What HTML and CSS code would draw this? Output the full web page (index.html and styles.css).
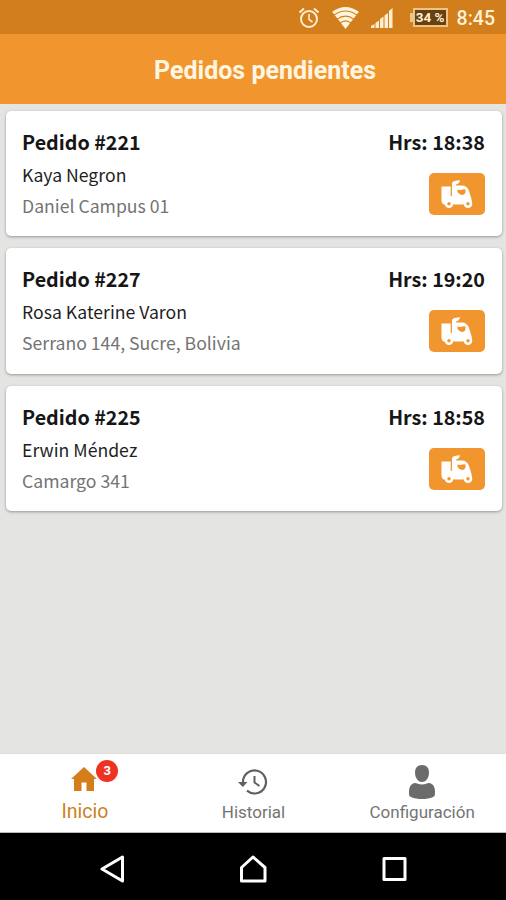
FILE: index.html
```
<!DOCTYPE html>
<html lang="es">
<head>
    <meta charset="UTF-8">
    <meta name="viewport" content="width=device-width, initial-scale=1.0">
    <title>Pedidos pendientes</title>
    <link rel="stylesheet" href="styles.css">
</head>
<body>
    <!-- truck icon shared by all the orders -->
    <svg class="defs" width="0" height="0">
        <symbol id="truck" viewBox="0 0 34 30">
            <path fill="#fff" d="M1.500 7.500h9.200v9.500h1.300V6.500h10q5 0 7 5.500l2.500 8q1 4.500-1.500 5.500H3.500q-2-1-2-4z"/>
            <path fill="#fff" d="M12 7V4q1.500-2.800 8-2.800-.5 3.500-4 4.300V8h-4z"/>
            <path fill="#f1962f" d="M17.500 10.500q2 .8 4 .2t4-.2v3q-1 2.500-3.500 2.500t-4.500-3z"/>
            <circle cx="9" cy="24.700" r="4.300" fill="#fff"/>
            <circle cx="28" cy="24.700" r="4.300" fill="#fff"/>
            <circle cx="9" cy="24.700" r="1.700" fill="#f1962f"/>
            <circle cx="28" cy="24.700" r="1.700" fill="#f1962f"/>
            <path fill="none" stroke="#f1962f" stroke-width=".8" d="M14 25.500v3M23 25.500v3"/>
        </symbol>
    </svg>

    <div class="status-bar">
        <svg class="alarm" width="22" height="22" viewBox="0 0 22 22" fill="none" stroke="#ffefd0" stroke-width="2">
            <circle cx="11" cy="12" r="8"/>
            <path d="M1.500 5.500l4.500-4M20.500 5.500l-4.500-4"/>
            <path d="M11 7v5.500l3.500 2.500" stroke-width="1.600"/>
        </svg>
        <svg class="wifi" width="27" height="22" viewBox="0 0 28 23">
            <path fill="#fff4dc" d="M14 23L0 5Q14-5 28 5z"/>
            <path fill="none" stroke="#d27e1c" stroke-width="1.100" d="M2 8.500q12-8.500 24 0M5 13q9-7 18 0M8 17q6-5 12 0"/>
        </svg>
        <svg class="signal" width="22" height="20" viewBox="0 0 22 20" fill="#ffefd0">
            <path d="M0 20v-2l3.500-2v4zM4.500 20v-5L8 12.500V20zM9 20v-9l3.500-2.500V20zM13.500 20V7.500L17 5v15zM18 20V3l3.500-3v20z"/>
        </svg>
        <div class="battery">34 %</div>
        <div class="clock">8:45</div>
    </div>

    <header class="header">
        <h1>Pedidos pendientes</h1>
    </header>

    <main class="orders">
        <div class="order">
            <div class="info">
                <h2>Pedido #221</h2>
                <p class="name">Kaya Negron</p>
                <p class="address">Daniel Campus 01</p>
            </div>
            <div class="side">
                <div class="time">Hrs: 18:38</div>
                <button class="deliver" aria-label="Entregar"><svg width="34" height="30"><use href="#truck"/></svg></button>
            </div>
        </div>
        <div class="order">
            <div class="info">
                <h2>Pedido #227</h2>
                <p class="name">Rosa Katerine Varon</p>
                <p class="address">Serrano 144, Sucre, Bolivia</p>
            </div>
            <div class="side">
                <div class="time">Hrs: 19:20</div>
                <button class="deliver" aria-label="Entregar"><svg width="34" height="30"><use href="#truck"/></svg></button>
            </div>
        </div>
        <div class="order">
            <div class="info">
                <h2>Pedido #225</h2>
                <p class="name">Erwin Méndez</p>
                <p class="address">Camargo 341</p>
            </div>
            <div class="side">
                <div class="time">Hrs: 18:58</div>
                <button class="deliver" aria-label="Entregar"><svg width="34" height="30"><use href="#truck"/></svg></button>
            </div>
        </div>
    </main>

    <nav class="tabs">
        <a class="tab active">
            <span class="icon">
                <svg width="26" height="24" viewBox="0 0 26 24" fill="#d67d1b">
                    <path d="M13 0l13 12h-3v12h-7.500v-8.500h-5V24H3V12H0z"/>
                </svg>
                <span class="badge">3</span>
            </span>
            <span class="label">Inicio</span>
        </a>
        <a class="tab">
            <span class="icon history">
                <svg width="30" height="26" viewBox="0 0 30 26" fill="none" stroke="#5f5f5f" stroke-width="2.200">
                    <path d="M5 15V13a11.500 11.500 0 1 1 4 8.700"/>
                    <path d="M16.500 7v6.500l5 3.500" stroke-width="2"/>
                    <path d="M0 13h9.500l-4.700 5z" fill="#5f5f5f" stroke="none"/>
                </svg>
            </span>
            <span class="label">Historial</span>
        </a>
        <a class="tab">
            <span class="icon person">
                <svg width="26" height="34" viewBox="0 0 26 34" fill="#6b6b6b">
                    <path d="M13 0c4.500 0 7 3 7 7.500S17.500 17 13 17 6 12 6 7.500 8.500 0 13 0z"/>
                    <path d="M6 18c2 0 3.500 1.500 7 1.500s5-1.500 7-1.500c4 .5 6 4 6 9 0 4-.5 4.500-2 5-3 1.500-7 2-11 2s-8-.5-11-2c-1.500-.5-2-1-2-5 0-5 2-8.500 6-9z"/>
                </svg>
            </span>
            <span class="label">Configuración</span>
        </a>
    </nav>

    <div class="android-nav">
        <svg width="26" height="28" viewBox="0 0 26 28"><path d="M3 14L23.500 2v24z"/></svg>
        <svg width="28" height="28" viewBox="0 0 28 28"><path d="M2.500 12.500L14 2l12 10.500V26H2.500z"/></svg>
        <svg width="26" height="28" viewBox="0 0 26 28"><path d="M3 3.500h21v21H3z"/></svg>
    </div>
</body>
</html>
```
FILE: styles.css
```
* {
    box-sizing: border-box;
}
body {
    margin: 0;
    height: 900px;
    display: flex;
    flex-direction: column;
    overflow: hidden;
    background: #e4e4e2;
    font-family: Roboto, sans-serif;
}
h1, h2, p {
    margin: 0;
}
svg {
    display: block;
    flex: none;
}
.defs {
    display: none;
}

.status-bar {
    height: 34px;
    flex: none;
    display: flex;
    align-items: flex-start;
    justify-content: flex-end;
    padding: 7px 11px 0 0;
    background: #d27e1c;
    color: #fff1d8;
}
.wifi {
    margin-left: 12px;
}
.signal {
    margin: 1px 0 0 12px;
}
.battery {
    position: relative;
    width: 35px;
    height: 19px;
    margin: 1px 0 0 20px;
    border: 2px solid #ecc488;
    background: #69400f;
    font-size: 13.500px;
    font-weight: 700;
    line-height: 15px;
    text-align: center;
    white-space: nowrap;
}
.battery::before {
    content: "";
    position: absolute;
    left: -5px;
    top: 3px;
    width: 3px;
    height: 9px;
    background: #ecc488;
}
.clock {
    margin-left: 9px;
    font-size: 19.500px;
    font-weight: 500;
    line-height: 23px;
}

.header {
    height: 70px;
    flex: none;
    display: flex;
    align-items: center;
    justify-content: center;
    padding: 4px 0 0 24px;
    background: #f1962f;
}
.header h1 {
    color: #fff6e2;
    font-size: 25px;
    font-weight: 700;
    line-height: 30px;
}

.orders {
    flex: 1;
    display: flex;
    flex-direction: column;
    gap: 12.300px;
    padding: 7px 4px 0 6px;
    font-family: "Noto Sans CJK SC", sans-serif;
}
.order {
    height: 125.200px;
    display: flex;
    justify-content: space-between;
    padding: 15px 17px 0 16px;
    background: #fff;
    border-radius: 5px;
    box-shadow: 0 1px 3px rgba(0,0,0,0.350);
}
.order h2, .time {
    color: #161616;
    font-size: 19.700px;
    font-weight: 700;
    line-height: 32px;
}
.name, .address {
    color: #1f1f1f;
    font-size: 17.650px;
    line-height: 31px;
}
.name {
    padding-top: 1px;
}
.address {
    color: #747474;
}
.side {
    display: flex;
    flex-direction: column;
    align-items: flex-end;
}
.deliver {
    width: 56px;
    height: 42px;
    margin-top: 15px;
    padding: 0;
    display: flex;
    align-items: center;
    justify-content: center;
    border: 0;
    border-radius: 5px;
    background: #f1962f;
}

.tabs {
    height: 80px;
    flex: none;
    display: grid;
    grid-template-columns: repeat(3, 1fr);
    background: #fff;
    border-top: 1px solid #dededc;
    border-bottom: 1px solid #bbb;
}
.tab {
    display: flex;
    flex-direction: column;
    align-items: center;
    color: #747474;
}
.icon {
    position: relative;
    height: 43px;
    padding-top: 13px;
}
.icon.history {
    padding-top: 15px;
}
.icon.person {
    padding-top: 11px;
}
.label {
    padding: 3px 0 0 1px;
    font-size: 17px;
    line-height: 24px;
}
.active .label {
    padding-top: 3px;
    color: #cd7f1d;
    font-size: 19.500px;
}
.badge {
    position: absolute;
    left: 25px;
    top: 6px;
    width: 22px;
    height: 22px;
    border-radius: 50%;
    background: #ee3322;
    color: #fff;
    font-size: 13px;
    font-weight: 700;
    line-height: 22px;
    text-align: center;
}

.android-nav {
    height: 67px;
    flex: none;
    display: flex;
    align-items: center;
    justify-content: center;
    gap: 114px;
    padding: 5px 1px 0 0;
    background: #000;
}
.android-nav svg {
    fill: none;
    stroke: #fff;
    stroke-width: 3;
    stroke-linejoin: round;
}
```
